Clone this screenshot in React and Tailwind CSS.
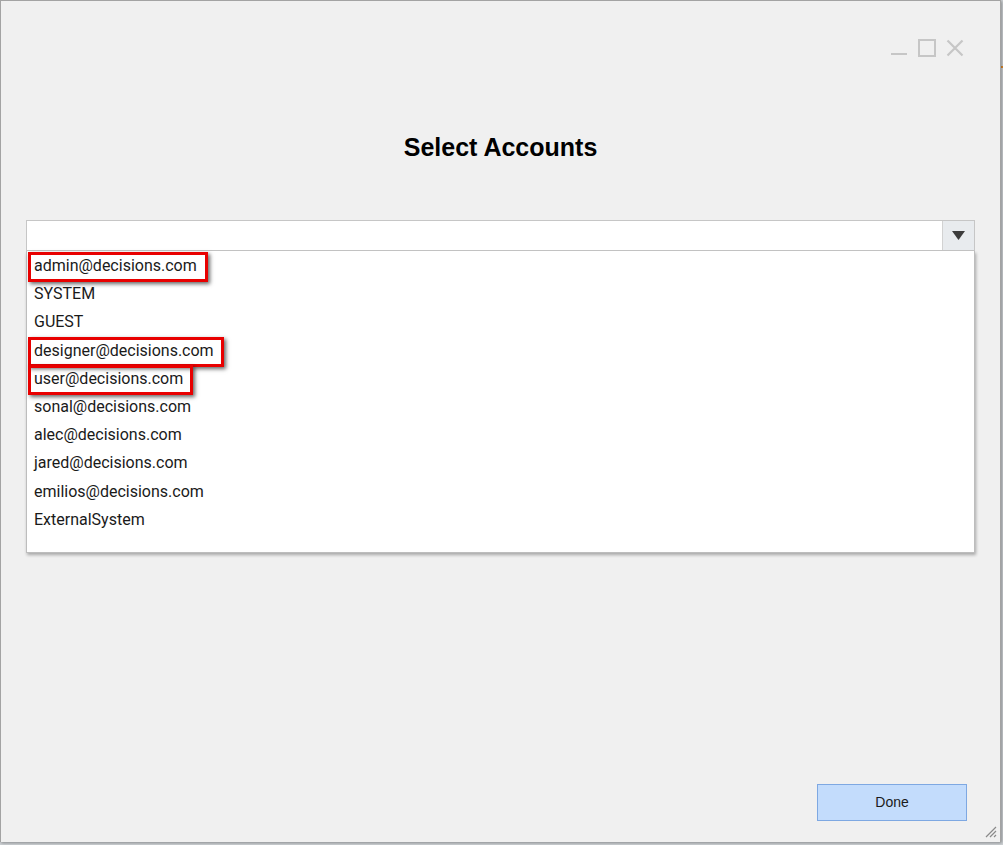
import React from "react";

const accounts = [
  { name: "admin@decisions.com", mark: 180 },
  { name: "SYSTEM" },
  { name: "GUEST" },
  { name: "designer@decisions.com", mark: 196 },
  { name: "user@decisions.com", mark: 165 },
  { name: "sonal@decisions.com" },
  { name: "alec@decisions.com" },
  { name: "jared@decisions.com" },
  { name: "emilios@decisions.com" },
  { name: "ExternalSystem" },
];

function WindowControls() {
  return (
    <div className="flex justify-end items-start pt-[38px] pr-[36px] gap-[12px] h-[57px]">
      <svg width="18" height="18" viewBox="0 0 18 18">
        <line x1="1" y1="15" x2="17" y2="15" stroke="#c6c6c6" strokeWidth="2" />
      </svg>
      <svg width="18" height="18" viewBox="0 0 18 18" className="-ml-[2px]">
        <rect x="1" y="1" width="16" height="16" fill="none" stroke="#c6c6c6" strokeWidth="2" />
      </svg>
      <svg width="18" height="18" viewBox="0 0 18 18" className="-ml-[2px]">
        <path d="M1.5 1.5 L16.5 16.5 M16.5 1.5 L1.5 16.5" stroke="#c6c6c6" strokeWidth="2.2" />
      </svg>
    </div>
  );
}

function AccountRow({ item }) {
  return (
    <li className="relative h-[28.2px] flex items-center pl-[7px] text-[16px] text-[#1a1a1a]">
      {item.mark && (
        <div
          className="absolute left-[1px] top-[0px] h-[30px] border-[3px] border-[#e80000] shadow-[2px_2px_4px_rgba(0,0,0,0.6)]"
          style={{ width: item.mark }}
        />
      )}
      <span className="relative">{item.name}</span>
    </li>
  );
}

export default function App() {
  return (
    <div className="w-[1003px] h-[845px] bg-[#cfd3d6] overflow-hidden relative">
      <div className="absolute right-0 top-[66px] w-[2px] h-[2px] bg-[#e08a2a]" />
      <div className="w-[1001px] h-[842px] bg-[#f0f0f0] border-l border-t border-r border-[#a3a3a3] shadow-[1px_1px_3px_rgba(0,0,0,0.35)] flex flex-col relative font-['Roboto',sans-serif]">
        <WindowControls />

        <h1 className="mt-[75px] text-center text-[25px] leading-[28px] font-bold text-black font-['Liberation_Sans',Arial,sans-serif]">
          Select Accounts
        </h1>

        <div className="mt-[59px] mx-[25px] w-[949px]">
          <div className="h-[31px] bg-white border border-[#c6c6c6] flex justify-end">
            <div className="w-[32px] h-full bg-[#e8ebee] border-l border-[#d2d2d2] flex items-center justify-center">
              <svg width="13" height="9" viewBox="0 0 13 9">
                <path d="M0 0 L13 0 L6.5 9 Z" fill="#3c3c3c" />
              </svg>
            </div>
          </div>
          <ul className="h-[302px] bg-white border border-t-0 border-[#bdbdbd] shadow-[1px_2px_3px_rgba(0,0,0,0.3)] pt-[1px]">
            {accounts.map((a) => (
              <AccountRow key={a.name} item={a} />
            ))}
          </ul>
        </div>

        <div className="mt-auto flex justify-end pr-[33px] pb-[21px]">
          <button className="w-[150px] h-[37px] bg-[#c3dcfc] border border-[#7ea8e2] text-[14px] text-[#1a1a1a] font-['Liberation_Sans',Arial,sans-serif]">
            Done
          </button>
        </div>

        <svg className="absolute right-[3px] bottom-[4px]" width="13" height="13" viewBox="0 0 13 13">
          <path d="M12 2 L2 12 M12 6 L6 12 M12 10 L10 12" stroke="#8a8a8a" strokeWidth="1.2" />
        </svg>
      </div>
    </div>
  );
}
